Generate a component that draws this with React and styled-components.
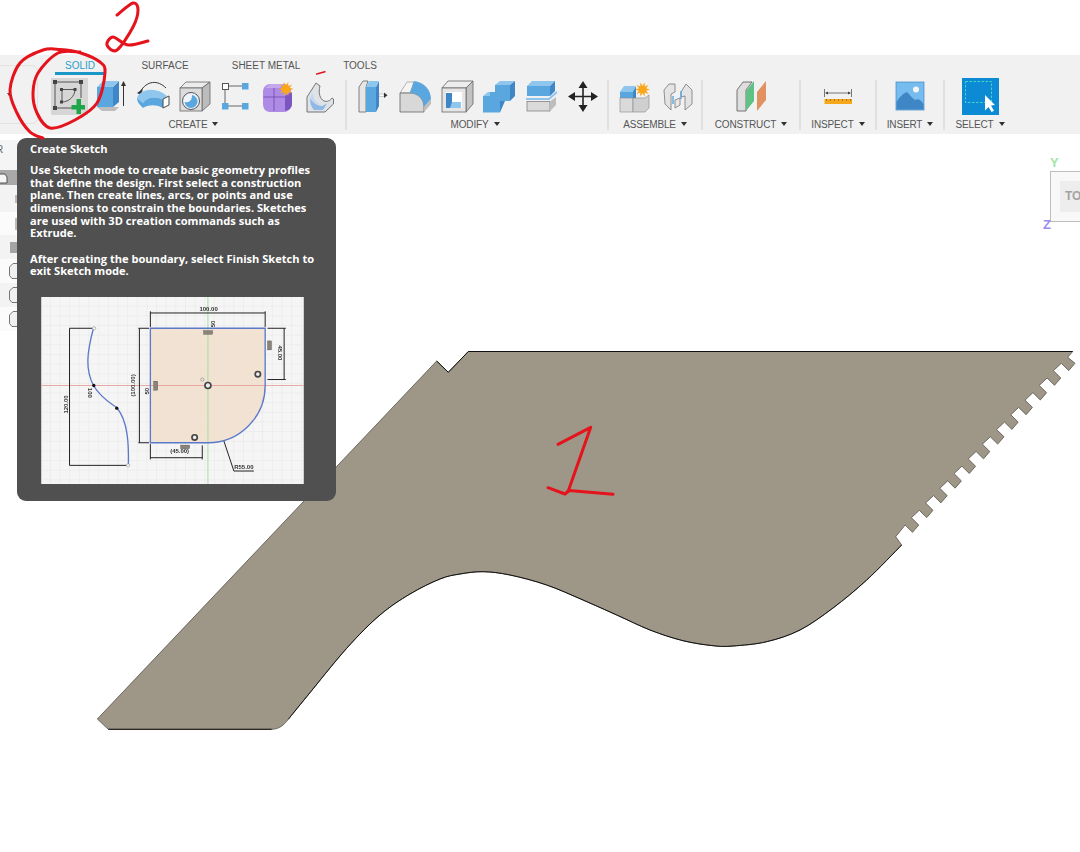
import React from 'react';
import styled, { createGlobalStyle } from 'styled-components';

const Global = createGlobalStyle`
  html, body { margin: 0; padding: 0; background: #fff; }
  body { font-family: "Liberation Sans", Arial, sans-serif; }
`;

const Page = styled.div`
  position: relative;
  width: 1080px;
  height: 852px;
  overflow: hidden;
  background: #fff;
  padding-top: 55px;
  box-sizing: border-box;
  display: flex;
  flex-direction: column;
`;

const Toolbar = styled.header`
  position: relative;
  height: 79px;
  background: #f1f1f1;
  flex: none;
  display: flex;
  flex-direction: column;
`;

const Tabs = styled.nav`
  height: 21px;
  display: flex;
  padding-left: 55px;
`;

const Tab = styled.div`
  width: ${p => p.$w}px;
  box-sizing: border-box;
  height: 20px;
  padding-top: 5px;
  text-align: center;
  font-size: 10px;
  line-height: 11px;
  color: ${p => (p.$active ? '#2a9fc9' : '#555')};
  border-bottom: ${p => (p.$active ? '3px solid #1a97c6' : '3px solid transparent')};
`;

const Ribbon = styled.div`
  margin-top: 2px;
  height: 56px;
  display: flex;
`;

const Stub = styled.div`
  width: 47px;
  flex: none;
  position: relative;
`;

const StubBox = styled.div`
  position: absolute;
  left: -20px;
  top: -13px;
  width: 58px;
  height: 59px;
  box-sizing: border-box;
  border: 1px solid #e2e2e2;
  border-radius: 6px;
  &::after {
    content: "";
    position: absolute;
    left: 26px;
    top: 27px;
    border-left: 2.5px solid transparent;
    border-right: 2.5px solid transparent;
    border-top: 3px solid #444;
  }
`;

const Group = styled.section`
  width: ${p => p.$w}px;
  flex: none;
  display: flex;
  flex-direction: column;
  align-items: center;
`;

const IconRow = styled.div`
  display: flex;
  height: 37px;
`;

const Slot = styled.div`
  width: 42px;
  height: 37px;
  display: flex;
  justify-content: center;
`;

const GroupLabel = styled.div`
  margin-top: 4px;
  display: flex;
  align-items: center;
  gap: 5px;
  font-size: 10px;
  letter-spacing: -0.15px;
  line-height: 12px;
  color: #555;
  padding-right: ${p => p.$pr || 0}px;
`;

const Caret = styled.span`
  width: 0;
  height: 0;
  border-left: 3px solid transparent;
  border-right: 3px solid transparent;
  border-top: 4px solid #333;
  margin-top: -2px;
`;

const Sep = styled.div`
  width: 2px;
  flex: none;
  height: 50px;
  margin-top: 2px;
  background: #e0e0e0;
`;

const Workspace = styled.main`
  flex: 1;
  display: flex;
  align-items: flex-start;
`;

const SidePanel = styled.aside`
  width: 17px;
  margin-top: 6px;
  background: #f5f5f5;
  display: flex;
  flex-direction: column;
`;

const PanelHead = styled.div`
  height: 30px;
  font-size: 10px;
  line-height: 20px;
  color: #666;
  text-indent: -4px;
  overflow: hidden;
`;

const PanelRow = styled.div`
  height: ${p => p.$h || 24}px;
  background: ${p => (p.$selected ? '#a9a9a9' : p.$odd ? '#fbfbfb' : '#f3f3f3')};
  display: flex;
  align-items: center;
  justify-content: ${p => (p.$start ? 'flex-start' : 'flex-end')};
`;

const RowSwatch = styled.span`
  width: ${p => p.$w}px;
  height: ${p => p.$h}px;
  background: ${p => p.$c};
  display: block;
`;

const CanvasLayer = styled.svg`
  position: absolute;
  left: 0;
  top: 0;
  width: 1080px;
  height: 852px;
  pointer-events: none;
`;

const Tip = styled.aside`
  position: absolute;
  left: 17px;
  top: 138px;
  width: 319px;
  height: 363px;
  box-sizing: border-box;
  padding: 4px 13px 0 13px;
  background: #505050;
  border-radius: 9px;
  color: #fff;
  font-family: "Open Sans", "Liberation Sans", sans-serif;
  font-weight: 700;
`;

const TipTitle = styled.div`
  font-size: 11.2px;
  line-height: 13px;
`;

const TipText = styled.p`
  margin: ${p => p.$mt}px 0 0;
  font-size: 11.1px;
  line-height: 12.65px;
  white-space: nowrap;
`;

const TipFigure = styled.svg`
  display: block;
  width: 263px;
  height: 187px;
  margin: 19px 0 0 11px;
  filter: blur(0.35px);
`;

const ViewCube = styled.div`
  position: absolute;
  left: 1050px;
  top: 171px;
  width: 40px;
  height: 51px;
  box-sizing: border-box;
  border: 1px solid #bdbdbd;
  background: #f8f8f8;
  padding: 9px 0 0 9px;
`;

const CubeFace = styled.div`
  height: 31px;
  background: #ededed;
  font-size: 12px;
  font-weight: 700;
  line-height: 31px;
  color: #a3a3a3;
  padding-left: 5px;
`;

const Axis = styled.span`
  position: absolute;
  left: ${p => p.$x}px;
  top: ${p => p.$y}px;
  font-size: 13px;
  line-height: 14px;
  font-weight: 700;
  color: ${p => p.$c};
`;

const GlyphSvg = styled.svg`
  display: block;
  width: 38px;
  height: 37px;
  overflow: visible;
  filter: blur(0.25px);
`;

const Glyph = ({ cx, children }) => (
  <GlyphSvg viewBox={`${cx - 19} 78 38 37`}>{children}</GlyphSvg>
);

const BLUE = '#5aa7e0';
const DARK = '#3f86c6';
const LIGHT = '#8fc6ee';
const EDGE = '#666';
const GREY = '#dadada';
const GREY2 = '#bdbdbd';

const star = (x, y, r1, r2, n = 10) => {
  const pts = [];
  for (let i = 0; i < n * 2; i++) {
    const r = i % 2 ? r2 : r1;
    const a = (Math.PI * i) / n;
    pts.push(`${(x + r * Math.cos(a)).toFixed(1)},${(y + r * Math.sin(a)).toFixed(1)}`);
  }
  return pts.join(' ');
};

const Sketch = () => (
  <Glyph cx={70}>
    <rect x="51" y="78" width="37" height="37" fill="#d6d6d6" />
    <g stroke="#555" fill="none" strokeWidth="1">
      <path d="M55 82H81V98M55 82V108H72" />
      <path d="M62 102V89.500H75M75 89.500C75 96 69 102 62 102" />
    </g>
    <g fill="#444">
      <rect x="53" y="80" width="4" height="4" />
      <rect x="79" y="80" width="4" height="4" />
      <rect x="53" y="106" width="4" height="4" />
      <rect x="60" y="88" width="3" height="3" />
      <rect x="73.500" y="88" width="3" height="3" />
      <rect x="60" y="100.500" width="3" height="3" />
    </g>
    <path d="M76.500 99H81V105H85V109.500H81V114H76.500V109.500H71.500V105H76.500Z" fill="#1fa64a" />
  </Glyph>
);

const Extrude = () => (
  <Glyph cx={112}>
    <path d="M97 107L102 111H115L119 107Z" fill={GREY2} />
    <path d="M97 87H113V107H97Z" fill={BLUE} />
    <path d="M113 87L119 81V102L113 107Z" fill={DARK} />
    <path d="M97 87L103 81H119L113 87Z" fill={LIGHT} />
    <path d="M123.500 106V83" stroke="#333" strokeWidth="1" />
    <path d="M121 86L123.500 81L126 86Z" fill="#333" />
  </Glyph>
);

const Revolve = () => (
  <Glyph cx={154}>
    <path d="M140 92C147 80 158 80 166 88" fill="none" stroke="#333" strokeWidth="1" />
    <path d="M137 93L143 89L141 95Z" fill="#333" />
    <path d="M137 98C141 88 157 87 167 96L163 100C156 96 147 97 143 103Z" fill={LIGHT} />
    <path d="M137 98L143 103C147 97 156 96 163 100V108C155 104 148 105 143 108C140 105 137 102 137 98Z" fill={BLUE} />
    <path d="M163 99L169 96V105L163 108Z" fill="#fff" stroke="#444" strokeWidth="1" />
  </Glyph>
);

const Hole = () => (
  <Glyph cx={196}>
    <path d="M180 88L186 82H210L202 88Z" fill="#ececec" stroke={EDGE} strokeWidth="0.8" />
    <path d="M202 88L210 82V104L202 111Z" fill="#bcbcbc" stroke={EDGE} strokeWidth="0.8" />
    <rect x="180" y="88" width="22" height="23" fill="#dcdcdc" stroke={EDGE} strokeWidth="0.8" />
    <circle cx="191" cy="101" r="8.500" fill="#eef4f9" stroke="#555" strokeWidth="1" />
    <path d="M184.500 102A6.500 6.500 0 1 0 192 95C192 100 190 103 184.500 102Z" fill={BLUE} />
  </Glyph>
);

const Pattern = () => (
  <Glyph cx={238}>
    <path d="M228 86H242M225 90V103M228 106H242" stroke="#666" strokeWidth="1" fill="none" />
    <rect x="222.500" y="83.500" width="6" height="6" fill="#fff" stroke="#555" />
    <rect x="242" y="83" width="6.500" height="6.500" fill={BLUE} />
    <rect x="222" y="103" width="6.500" height="6.500" fill={BLUE} />
    <rect x="242" y="103" width="6.500" height="6.500" fill={BLUE} />
  </Glyph>
);

const Primitive = () => (
  <Glyph cx={280}>
    <path d="M263 92C263 87 266 84 271 84H284C288 84 291 88 291 92V104C291 109 288 112 284 112H270C266 112 263 109 263 104Z" fill="#ae8ce6" />
    <path d="M285 96L292 92V104C292 108 289 110 285 111Z" fill="#7d55c0" />
    <path d="M263.500 97H285M274 86V111" stroke="#6e48b0" strokeWidth="0.8" />
    <path d="M265 88L271 84H284L280 88Z" fill="#c6a8ee" />
    <polygon points={star(286, 89, 7.500, 3.800)} fill="#f9a61a" />
  </Glyph>
);

const Rib = () => (
  <Glyph cx={322}>
    <path d="M307 97L316 83L320 86C318 93 320 99 324 101C327 102 330 101 332 98L333.500 99V104L325 112H307Z" fill="#dfe3e8" stroke="#666" strokeWidth="0.9" />
    <path d="M310 98C313 103 318 106 322 106L327 103.500L323 110H314C311 107 310 103 310 98Z" fill="#8fb8e4" />
    <path d="M313 93C313 99 317 104 322 105C317 105 311 102 310 97Z" fill="#c5d8ee" />
  </Glyph>
);

const PressPull = () => (
  <Glyph cx={372}>
    <path d="M359 87L363 81H368L366 87V112H359Z" fill="#e6e6e6" stroke="#666" strokeWidth="0.8" />
    <path d="M366 87H376V112H366Z" fill={BLUE} />
    <path d="M376 87L379 81V106L376 112Z" fill={DARK} />
    <path d="M366 87L369 81H379L376 87Z" fill={LIGHT} />
    <rect x="379" y="94" width="5" height="2.500" fill="#fff" stroke="#888" strokeWidth="0.4" />
    <path d="M384 92.500L387.500 95.250L384 98Z" fill="#333" />
  </Glyph>
);

const Fillet = () => (
  <Glyph cx={414}>
    <path d="M400 93L407 82H414L410 93Z" fill="#f4f4f4" stroke="#888" strokeWidth="0.6" />
    <path d="M400 93H410C418 93 424 99 424 107V112H400Z" fill="#d8d8d8" stroke="#666" strokeWidth="0.8" />
    <path d="M414 81C424 82 431 90 431 99L424 107C424 99 418 93 410 93Z" fill={BLUE} />
    <path d="M424 107L431 99V104L424 112Z" fill={GREY2} />
  </Glyph>
);

const Shell = () => (
  <Glyph cx={456}>
    <path d="M442 88L448 81H473L466 88Z" fill="#ededed" stroke="#666" strokeWidth="0.8" />
    <path d="M466 88L473 81V104L466 112Z" fill="#c2c2c2" stroke="#666" strokeWidth="0.8" />
    <rect x="442" y="88" width="24" height="24" fill="#e6e6e6" stroke="#666" strokeWidth="0.8" />
    <rect x="446" y="92" width="16" height="16" fill="#fff" />
    <path d="M446 93H452V102H461V108H446Z" fill="#3f86c6" />
    <path d="M452 102H461V108H450Z" fill={LIGHT} />
  </Glyph>
);

const Combine = () => (
  <Glyph cx={498}>
    <path d="M495 85L500 81H515L510 85Z" fill={LIGHT} />
    <rect x="495" y="85" width="15" height="16" fill={BLUE} />
    <path d="M510 85L515 81V96L510 101Z" fill={DARK} />
    <path d="M483 96L488 92H495V96Z" fill={LIGHT} />
    <rect x="483" y="96" width="17" height="16.500" fill={BLUE} />
    <path d="M500 101H505L500 112.500Z" fill={DARK} />
    <rect x="490" y="92" width="12" height="9" fill={BLUE} />
  </Glyph>
);

const OffsetPlane = () => (
  <Glyph cx={540}>
    <path d="M527 86L532 81H555L550 86Z" fill={LIGHT} />
    <rect x="527" y="86" width="23" height="10" fill={BLUE} />
    <path d="M550 86L555 81V91L550 96Z" fill={DARK} />
    <path d="M526 99H549L557 92" fill="none" stroke="#8cc4ee" strokeWidth="1.800" />
    <rect x="527" y="101.500" width="23" height="9.500" fill={GREY} stroke="#777" strokeWidth="0.7" />
    <path d="M550 101.500L556 97V105L550 111Z" fill={GREY2} />
  </Glyph>
);

const MoveTool = () => (
  <Glyph cx={582}>
    <path d="M583 84V109M570 96.500H596" stroke="#222" strokeWidth="1.600" />
    <path d="M583 81L587.500 88H578.500ZM583 112L587.500 105H578.500ZM568 96.500L575 92V101ZM598 96.500L591 92V101Z" fill="#222" />
  </Glyph>
);

const AssembleNew = () => (
  <Glyph cx={634}>
    <path d="M620 92L624 87H636V98H620Z" fill={BLUE} />
    <path d="M620 92L624 86H636L633 92Z" fill={LIGHT} />
    <path d="M633 92L636 87V98H633Z" fill={DARK} />
    <rect x="620" y="98" width="13" height="14" fill={GREY} stroke="#888" strokeWidth="0.6" />
    <path d="M633 98H645L649 95V108L645 112H633Z" fill="#cfcfcf" stroke="#888" strokeWidth="0.6" />
    <polygon points={star(642.500, 89.500, 7.500, 3.800)} fill="#f9a61a" />
  </Glyph>
);

const AssembleJoint = () => (
  <Glyph cx={676}>
    <path d="M664 90L669 84L675 84V92L671 94V110L665 104Z" fill="#e4e4e4" stroke="#777" strokeWidth="0.8" />
    <path d="M692 90L686 84L681 92V97L685 96V110L692 104Z" fill="#e4e4e4" stroke="#777" strokeWidth="0.8" />
    <path d="M673 96V104M681 91V99" stroke={BLUE} strokeWidth="1.400" />
    <path d="M675 100V108L680 105V98Z" fill="#e8e8e8" stroke="#777" strokeWidth="0.8" />
  </Glyph>
);

const Construct = () => (
  <Glyph cx={751}>
    <path d="M737 90L743 82H752L746 90V111H737Z" fill="#dedede" stroke="#555" strokeWidth="0.8" />
    <path d="M746 91L754 81V101L746 111Z" fill="#5fc183" />
    <path d="M757 92L766 81V100L757 111Z" fill="#e09360" />
  </Glyph>
);

const Inspect = () => (
  <Glyph cx={838}>
    <path d="M824.500 89V97M851.500 89V97" stroke="#555" strokeWidth="0.8" />
    <path d="M826 93H850" stroke="#555" strokeWidth="0.8" />
    <path d="M825 93L828 91.500V94.500ZM851 93L848 91.500V94.500Z" fill="#444" />
    <rect x="824.500" y="99" width="27.500" height="5" fill="#f5a81c" />
    <path d="M826.500 99V101M830.500 99V101M834.500 99V101M838.500 99V101M842.500 99V101M846.500 99V101M850.500 99V101" stroke="#8a5a00" strokeWidth="0.7" />
  </Glyph>
);

const Insert = () => (
  <Glyph cx={910}>
    <rect x="896" y="82" width="28" height="28" fill="#76bcee" stroke="#3f86c6" strokeWidth="0.7" />
    <circle cx="916" cy="89.500" r="3" fill="#f5f5f5" />
    <path d="M896.500 102C900 96 904 93 907 92C910 95 912 98 915 100C918 98 921 100 923.500 104V109.500H896.500Z" fill="#3f86c6" />
  </Glyph>
);

const SelectTool = () => (
  <Glyph cx={980}>
    <rect x="962" y="78" width="37" height="37" fill="#0c8ad4" />
    <rect x="965.500" y="81.500" width="26" height="21" fill="none" stroke="#3fd6c8" strokeWidth="1" strokeDasharray="2.500 1.500" />
    <path d="M985 95V110.500L988.500 107L991.500 112L994 110.800L991 105.500L995 105Z" fill="#fff" />
  </Glyph>
);

const ribbon = [
  { w: 298, label: 'CREATE', pr: 5, icons: [Sketch, Extrude, Revolve, Hole, Pattern, Primitive, Rib] },
  { w: 260, label: 'MODIFY', pr: 4, icons: [PressPull, Fillet, Shell, Combine, OffsetPlane, MoveTool] },
  { w: 92, label: 'ASSEMBLE', icons: [AssembleNew, AssembleJoint] },
  { w: 96, label: 'CONSTRUCT', icons: [Construct] },
  { w: 74, label: 'INSPECT', icons: [Inspect] },
  { w: 66, label: 'INSERT', icons: [Insert] },
  { w: 70, label: 'SELECT', icons: [SelectTool] },
];

/* Smooth curve through points (Catmull-Rom converted to cubic Béziers). */
const spline = pts => {
  let d = '';
  for (let i = 0; i < pts.length - 1; i++) {
    const p0 = pts[Math.max(0, i - 1)];
    const p1 = pts[i];
    const p2 = pts[i + 1];
    const p3 = pts[Math.min(pts.length - 1, i + 2)];
    const c1 = [p1[0] + (p2[0] - p0[0]) / 6, p1[1] + (p2[1] - p0[1]) / 6];
    const c2 = [p2[0] - (p3[0] - p1[0]) / 6, p2[1] - (p3[1] - p1[1]) / 6];
    d += `C${c1[0].toFixed(1)} ${c1[1].toFixed(1)} ${c2[0].toFixed(1)} ${c2[1].toFixed(1)} ${p2[0]} ${p2[1]}`;
  }
  return d;
};

const teeth = () => {
  let d = 'L1067.7 357.3';
  for (let i = 0; i < 12; i++) {
    const ax = 1075 - 14.2 * i;
    const ay = 363.3 + 14.7 * i;
    const bx = ax - 6.3;
    const by = ay + 7.3;
    const cx = bx - 7.4;
    const cy = by - 7.3;
    d += `L${ax.toFixed(1)} ${ay.toFixed(1)}L${bx.toFixed(1)} ${by.toFixed(1)}L${cx.toFixed(1)} ${cy.toFixed(1)}`;
    if (i < 11) d += `L${(cx - 7.9).toFixed(1)} ${(cy + 7.4).toFixed(1)}`;
  }
  return d;
};

const underside = [
  [901.7, 545], [866.7, 580], [833, 608], [800, 630], [766.7, 641.7], [733, 646], [713, 645.7],
  [683, 640.7], [650, 630], [616.7, 615], [583, 600], [546.7, 585], [510, 575], [483.3, 571.7],
  [460, 574], [440, 579], [410, 594], [380, 615], [346.7, 648.3], [306.7, 696.7], [288.3, 719.3],
];

const undersidePath = spline(underside);

const partPath =
  `M468.3 351.5H1072.7${teeth()}L895.7 536.7L901.7 545` +
  undersidePath +
  'C284 725 279 729.300 271.700 729.300H108.300L97.300 719L436.700 361L448.300 372.300Z';

const ink = {
  circle: spline([
    [43, 138], [30, 132], [17, 113], [10, 90], [20, 63], [43, 50], [60, 49.500], [80, 52.700],
    [100, 62], [105, 73], [97, 103], [75, 120], [50, 128], [37, 113], [33, 93], [38, 73], [58, 53], [80, 52],
  ]),
  two: spline([
    [117, 15], [133, 3], [138, 10], [133, 27], [117, 50], [107, 45], [113, 37], [128, 45], [148, 41],
  ]),
};

const Part = () => (
  <CanvasLayer viewBox="0 0 1080 852">
    <path d={partPath} fill="#9e9787" stroke="#55524a" strokeWidth="0.8" />
    <g fill="none" stroke="#111" strokeWidth="1">
      <path d="M468.3 351.5H1072.7" />
      <path d="M271.700 729.300H108.300" />
      <path d={`M901.7 545${undersidePath}`} />
      <path d="M436.700 361L448.300 372.300L468.300 351.500" />
    </g>
  </CanvasLayer>
);

const Ink = () => (
  <CanvasLayer viewBox="0 0 1080 852">
    <g fill="none" stroke="#e5131c" strokeLinecap="round" strokeLinejoin="round">
      <path d={`M43 138${ink.circle}`} strokeWidth="3" />
      <path d={`M117 15${ink.two}`} strokeWidth="3" />
      <path d="M316.700 74L325 71.700" strokeWidth="1.500" />
      <path d="M558 444.300L590.700 427.300L568 491.700" strokeWidth="3" />
      <path d="M548 487.700L565 494L569 490.500L613 494.300" strokeWidth="3" />
    </g>
  </CanvasLayer>
);

const dim = { stroke: '#222', strokeWidth: 3, fill: 'none' };
const sketchLine = { stroke: '#5b79c9', strokeWidth: 4, fill: 'none' };
const txt = { fontFamily: '"Liberation Sans", sans-serif', fontSize: 18, fill: '#333', textAnchor: 'middle' };

const Figure = () => (
  <TipFigure viewBox="33 22 789 562">
    <defs>
      <pattern id="gridMinor" x="33" y="22" width="29" height="29" patternUnits="userSpaceOnUse">
        <path d="M29 0V29H0" fill="none" stroke="#dedede" strokeWidth="2" />
      </pattern>
    </defs>
    <rect x="33" y="22" width="789" height="562" fill="#f5f5f5" />
    <rect x="33" y="22" width="789" height="562" fill="url(#gridMinor)" />
    <path d="M361 116H706V288A172 172 0 0 1 534 460H361Z" fill="#f2e2d2" />
    <rect x="361" y="116" width="345" height="344" fill="url(#gridMinor)" opacity="0.35" />
    <path d="M33 288H822" stroke="#e59a96" strokeWidth="2.500" />
    <path d="M534 22V584" stroke="#a6dca6" strokeWidth="3" />
    <path d="M361 116H706V288A172 172 0 0 1 534 460H361Z" {...sketchLine} />
    <path d="M190 116C170 190 165 240 190 288C215 330 250 345 260 355C295 395 296 470 295 528" {...sketchLine} />

    <path d="M361 65V112M706 65V112M361 70H706" {...dim} />
    <path d="M713 116H768M713 270H768M763 116V270" {...dim} />
    <path d="M325 116H357M325 460H357M328 116V460" {...dim} />
    <path d="M118 116H190M118 528H294M118 116V528" {...dim} />
    <path d="M361 464V510M517 468V510M361 505H517" {...dim} />
    <path d="M582 455L612 545H672" {...dim} />

    <text {...txt} x="536" y="63">100.00</text>
    <text {...txt} transform="translate(745 190) rotate(90)">45.00</text>
    <text {...txt} transform="translate(316 288) rotate(-90)">(100.00)</text>
    <text {...txt} transform="translate(112 345) rotate(-90)">120.00</text>
    <text {...txt} transform="translate(173 310) rotate(90)">100</text>
    <text {...txt} transform="translate(555 103) rotate(-90)">50</text>
    <text {...txt} transform="translate(358 305) rotate(-90)">50</text>
    <text {...txt} x="449" y="492">(45.00)</text>
    <text {...txt} x="642" y="540">R55.00</text>

    <circle cx="192" cy="116" r="5" fill="#f5f5f5" stroke="#888" strokeWidth="1.500" />
    <circle cx="294" cy="528" r="5" fill="#f5f5f5" stroke="#888" strokeWidth="1.500" />
    <circle cx="191" cy="288" r="5" fill="#111" />
    <circle cx="260" cy="356" r="5" fill="#111" />

    <g fill="#8a8378" stroke="#444" strokeWidth="1">
      <rect x="521" y="123" width="27" height="11" />
      <rect x="713" y="154" width="12" height="27" />
      <rect x="371" y="275" width="12" height="27" />
      <rect x="452" y="467" width="27" height="11" />
    </g>
    <g fill="#eee" stroke="#444" strokeWidth="5">
      <circle cx="534" cy="288" r="9" />
      <circle cx="684" cy="254" r="8" />
      <circle cx="494" cy="444" r="8" />
    </g>
    <circle cx="517" cy="270" r="5" fill="none" stroke="#777" strokeWidth="1.500" />
  </TipFigure>
);

const HexMark = () => (
  <svg width="8" height="16" viewBox="0 0 8 16">
    <path d="M8 0.500H4L0.500 4V12.500L3 15.500H8" fill="#f0f0f0" stroke="#666" strokeWidth="0.9" />
  </svg>
);

const FolderMark = () => (
  <svg width="8" height="14" viewBox="0 0 8 14">
    <path d="M0 3H5L7 6V12H0" fill="#f5f5f5" stroke="#444" strokeWidth="0.9" />
  </svg>
);

const Panel = () => (
  <SidePanel>
    <PanelHead>R</PanelHead>
    <PanelRow $selected $h={15} $start><FolderMark /></PanelRow>
    <PanelRow $h={27}><RowSwatch $w={2} $h={8} $c="#bbb" /></PanelRow>
    <PanelRow $h={23} $odd><RowSwatch $w={2} $h={12} $c="#bbb" /></PanelRow>
    <PanelRow $h={24}><RowSwatch $w={7} $h={11} $c="#a5a5a5" /></PanelRow>
    <PanelRow $h={24} $odd><HexMark /></PanelRow>
    <PanelRow $h={24}><HexMark /></PanelRow>
    <PanelRow $h={24} $odd><HexMark /></PanelRow>
  </SidePanel>
);

export default function App() {
  return (
    <>
      <Global />
      <Page>
        <Part />
        <Toolbar>
          <Tabs>
            <Tab $w={50} $active>SOLID</Tab>
            <Tab $w={120}>SURFACE</Tab>
            <Tab $w={82}>SHEET METAL</Tab>
            <Tab $w={106}>TOOLS</Tab>
          </Tabs>
          <Ribbon>
            <Stub><StubBox /></Stub>
            {ribbon.map((g, i) => (
              <React.Fragment key={g.label}>
                {i > 0 && <Sep />}
                <Group $w={g.w}>
                  <IconRow>
                    {g.icons.map((Icon, j) => (
                      <Slot key={j}><Icon /></Slot>
                    ))}
                  </IconRow>
                  <GroupLabel $pr={g.pr}>{g.label}<Caret /></GroupLabel>
                </Group>
              </React.Fragment>
            ))}
          </Ribbon>
        </Toolbar>
        <Workspace>
          <Panel />
        </Workspace>
        <Tip>
          <TipTitle>Create Sketch</TipTitle>
          <TipText $mt={9}>
            Use Sketch mode to create basic geometry profiles<br />
            that define the design. First select a construction<br />
            plane. Then create lines, arcs, or points and use<br />
            dimensions to constrain the boundaries. Sketches<br />
            are used with 3D creation commands such as<br />
            Extrude.
          </TipText>
          <TipText $mt={12.6}>
            After creating the boundary, select Finish Sketch to<br />
            exit Sketch mode.
          </TipText>
          <Figure />
        </Tip>
        <Axis $x={1050} $y={156} $c="#9fe6a8">Y</Axis>
        <ViewCube><CubeFace>TO</CubeFace></ViewCube>
        <Axis $x={1043} $y={218} $c="#9a8cf0">Z</Axis>
        <Ink />
      </Page>
    </>
  );
}
